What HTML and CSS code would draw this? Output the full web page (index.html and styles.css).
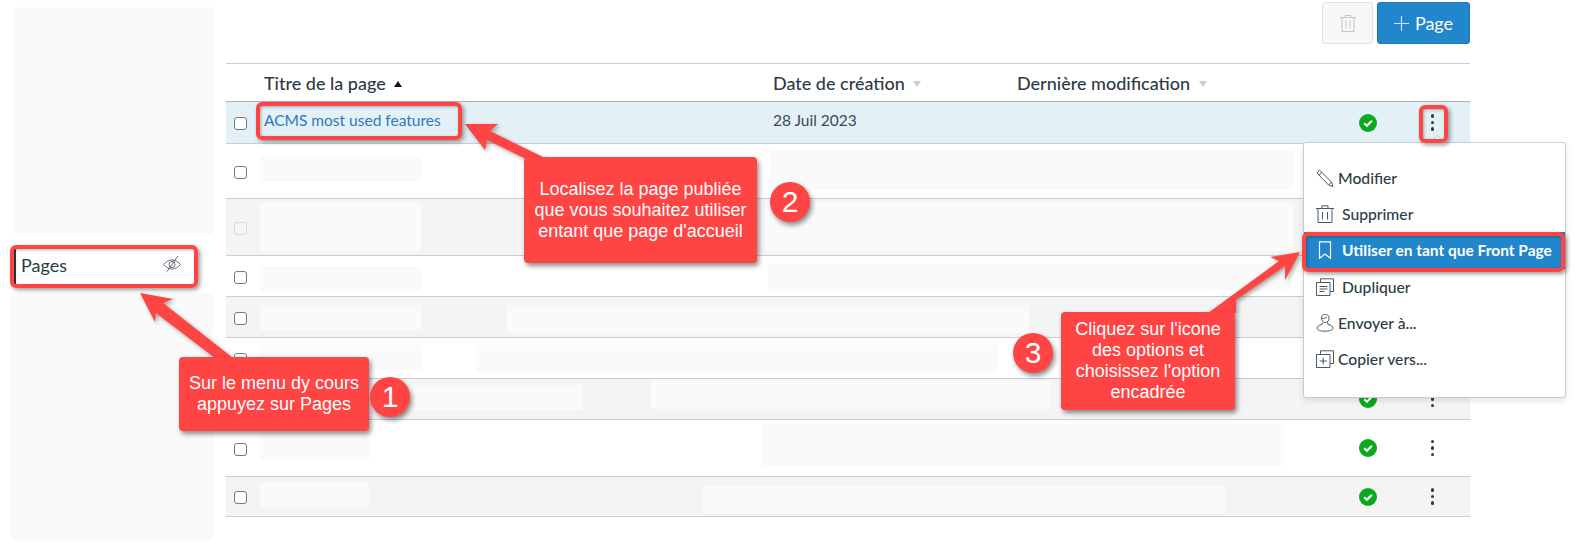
FILE: index.html
```html
<!doctype html>
<html lang="fr">
  <head>
    <meta charset="UTF-8" />
    <meta name="viewport" content="width=device-width, initial-scale=1.0" />
    <title>Pages</title>
    <link rel="stylesheet" href="styles.css">
  </head>
  <body>
    <div class="page">
      <aside class="sidebar">
        <div class="mask-side-top"></div>
        <a class="nav-link">
          <span>Pages</span>
          <svg class="nav-eye" viewBox="0 0 18 18" fill="none" stroke="#4f5b65" stroke-width="0.900">
            <path d="M.5 9.500C3 6.500 6 5 9 5s6 1.500 8.500 4.500C15 12.500 12 14 9 14s-6-1.500-8.500-4.500z" />
            <circle cx="9" cy="9.500" r="3" />
            <path d="M4 16.500 15 1" />
          </svg>
        </a>
        <div class="mask-side-bottom"></div>
      </aside>

      <main class="content">
        <div class="toolbar">
          <button class="btn-trash" disabled>
            <svg class="icon-18" viewBox="0 0 18 18" fill="none" stroke="#c2c6ca" stroke-width="1">
              <path d="M1 3.500h16M6 3.500V1.500h6v2M3 3.500v14h12v-14M7 6.500v8M11 6.500v8" />
            </svg>
          </button>
          <button class="btn-page">
            <svg class="btn-plus" viewBox="0 0 15 15" fill="none" stroke="#d5e6f3" stroke-width="1.200">
              <path d="M7.500 0v15M0 7.500h15" />
            </svg>
            Page
          </button>
        </div>

        <div class="table">
          <div class="row-head">
            <span></span>
            <span class="head-cell">Titre de la page <i class="caret caret-dark"></i></span>
            <span class="head-cell">Date de création <i class="caret"></i></span>
            <span class="head-cell">Dernière modification <i class="caret"></i></span>
          </div>

          <div class="row row-1 row-selected">
            <input class="check" type="checkbox" />
            <a class="title-link">ACMS most used features</a>
            <span class="date">28 Juil 2023</span>
            <span></span>
            <svg class="status" viewBox="0 0 18 18"><circle cx="9" cy="9" r="9" fill="#0aaa1e" /><path d="M5.200 9.300 7.900 11.800 12.900 6.800" fill="none" stroke="#fff" stroke-width="2.200" /></svg>
            <span class="kebab"><i></i><i></i><i></i></span>
          </div>

          <div class="row row-2">
            <input class="check" type="checkbox" />
            <span></span><span></span><span></span>
            <svg class="status" viewBox="0 0 18 18"><circle cx="9" cy="9" r="9" fill="#0aaa1e" /><path d="M5.200 9.300 7.900 11.800 12.900 6.800" fill="none" stroke="#fff" stroke-width="2.200" /></svg>
            <span class="kebab"><i></i><i></i><i></i></span>
            <div class="mask mask-a"></div>
            <div class="mask mask-b"></div>
          </div>

          <div class="row row-3 row-alt">
            <input class="check" type="checkbox" disabled />
            <span></span><span></span><span></span>
            <svg class="status" viewBox="0 0 18 18"><circle cx="9" cy="9" r="9" fill="#0aaa1e" /><path d="M5.200 9.300 7.900 11.800 12.900 6.800" fill="none" stroke="#fff" stroke-width="2.200" /></svg>
            <span class="kebab"><i></i><i></i><i></i></span>
            <div class="mask mask-a"></div>
            <div class="mask mask-b"></div>
          </div>

          <div class="row row-4">
            <input class="check" type="checkbox" />
            <span></span><span></span><span></span>
            <svg class="status" viewBox="0 0 18 18"><circle cx="9" cy="9" r="9" fill="#0aaa1e" /><path d="M5.200 9.300 7.900 11.800 12.900 6.800" fill="none" stroke="#fff" stroke-width="2.200" /></svg>
            <span class="kebab"><i></i><i></i><i></i></span>
            <div class="mask mask-a"></div>
            <div class="mask mask-b"></div>
          </div>

          <div class="row row-5 row-alt">
            <input class="check" type="checkbox" />
            <span></span><span></span><span></span>
            <svg class="status" viewBox="0 0 18 18"><circle cx="9" cy="9" r="9" fill="#0aaa1e" /><path d="M5.200 9.300 7.900 11.800 12.900 6.800" fill="none" stroke="#fff" stroke-width="2.200" /></svg>
            <span class="kebab"><i></i><i></i><i></i></span>
            <div class="mask mask-a"></div>
            <div class="mask mask-b"></div>
          </div>

          <div class="row row-6">
            <input class="check" type="checkbox" />
            <span></span><span></span><span></span>
            <svg class="status" viewBox="0 0 18 18"><circle cx="9" cy="9" r="9" fill="#0aaa1e" /><path d="M5.200 9.300 7.900 11.800 12.900 6.800" fill="none" stroke="#fff" stroke-width="2.200" /></svg>
            <span class="kebab"><i></i><i></i><i></i></span>
            <div class="mask mask-a"></div>
            <div class="mask mask-b"></div>
          </div>

          <div class="row row-7 row-alt">
            <input class="check" type="checkbox" />
            <span></span><span></span><span></span>
            <svg class="status" viewBox="0 0 18 18"><circle cx="9" cy="9" r="9" fill="#0aaa1e" /><path d="M5.200 9.300 7.900 11.800 12.900 6.800" fill="none" stroke="#fff" stroke-width="2.200" /></svg>
            <span class="kebab"><i></i><i></i><i></i></span>
            <div class="mask mask-a"></div>
            <div class="mask mask-b"></div>
          </div>

          <div class="row row-8">
            <input class="check" type="checkbox" />
            <span></span><span></span><span></span>
            <svg class="status" viewBox="0 0 18 18"><circle cx="9" cy="9" r="9" fill="#0aaa1e" /><path d="M5.200 9.300 7.900 11.800 12.900 6.800" fill="none" stroke="#fff" stroke-width="2.200" /></svg>
            <span class="kebab"><i></i><i></i><i></i></span>
            <div class="mask mask-a"></div>
            <div class="mask mask-b"></div>
          </div>

          <div class="row row-9 row-alt">
            <input class="check" type="checkbox" />
            <span></span><span></span><span></span>
            <svg class="status" viewBox="0 0 18 18"><circle cx="9" cy="9" r="9" fill="#0aaa1e" /><path d="M5.200 9.300 7.900 11.800 12.900 6.800" fill="none" stroke="#fff" stroke-width="2.200" /></svg>
            <span class="kebab"><i></i><i></i><i></i></span>
            <div class="mask mask-a"></div>
            <div class="mask mask-b"></div>
          </div>
        </div>
      </main>
    </div>

    <!-- dropdown opened from the first row -->
    <ul class="menu">
      <li class="menu-item">
        <svg class="icon-18" viewBox="0 0 18 18" fill="none" stroke="#4d5a64" stroke-width="1">
          <path d="M1 4 3.500 1.200 15.500 13 17 17.500 12.500 16zM3 6.200 5.700 3.300M12.500 16 15.500 13" />
        </svg>
        <span>Modifier</span>
      </li>
      <li class="menu-item wide">
        <svg class="icon-18" viewBox="0 0 18 18" fill="none" stroke="#4d5a64" stroke-width="1">
          <path d="M0 3.500h18M6 3.500V.8h6v2.700M2 3.500v14h14v-14M6.500 7v7.500M11.500 7v7.500" />
        </svg>
        <span>Supprimer</span>
      </li>
      <li class="menu-item wide active">
        <svg class="icon-18" viewBox="0 0 18 18" fill="none" stroke="#fff" stroke-width="1.200">
          <path d="M3.500 .8h11v16.500L9 13l-5.500 4.300z" />
        </svg>
        <span>Utiliser en tant que Front Page</span>
      </li>
      <li class="menu-item wide">
        <svg class="icon-18" viewBox="0 0 18 18" fill="none" stroke="#4d5a64" stroke-width="1">
          <path d="M.5 4.500h13.500v13H.5zM4.500 4.500V.8h13v12.700H14M3.500 8.500h8M3.500 11h8M3.500 13.500h5" />
        </svg>
        <span>Dupliquer</span>
      </li>
      <li class="menu-item">
        <svg class="icon-18" viewBox="0 0 18 18" fill="none" stroke="#4d5a64" stroke-width="1">
          <path d="M5.500 4.500a3.800 3.800 0 1 1 7.500 0c0 2-1.500 4-3.700 4s-3.800-2-3.800-4zM5.500 4.300c2.500 .5 4.500-.3 5.500-1.500M6.500 8.500 6 10.500c-3 .5-5 2-5 3.700 0 1.800 3.500 3 8 3s8-1.200 8-3c0-1.700-2-3.200-5-3.700l-.5-2" />
        </svg>
        <span>Envoyer à...</span>
      </li>
      <li class="menu-item">
        <svg class="icon-18" viewBox="0 0 18 18" fill="none" stroke="#4d5a64" stroke-width="1">
          <path d="M.5 4.500h13.500v13H.5zM4.500 4.500V.8h13v12.700H14M7.200 7.500v7M3.700 11h7" />
        </svg>
        <span>Copier vers...</span>
      </li>
    </ul>

    <!-- annotations drawn over the screenshot -->
    <svg class="arrows" viewBox="0 0 1581 551">
      <polygon points="140,293 173,299 163,303 233,358 215,358 156,313 155,322" />
      <polygon points="465,124 498,124 490,131 545,158 524,158 487,140 485,150" />
      <polygon points="1300,252 1270,257 1279,261 1208,313 1236,313 1236,300 1285,266 1285,280" />
    </svg>

    <div class="mark mark-nav"></div>
    <div class="mark mark-title"></div>
    <div class="mark mark-kebab"></div>
    <div class="mark mark-item"></div>

    <div class="callout callout-1">Sur le menu dy cours<br />appuyez sur Pages</div>
    <div class="callout callout-2">Localisez la page publiée<br />que vous souhaitez utiliser<br />entant que page d'accueil</div>
    <div class="callout callout-3">Cliquez sur l'icone<br />des options et<br />choisissez l'option<br />encadrée</div>

    <div class="step step-1">1</div>
    <div class="step step-2">2</div>
    <div class="step step-3">3</div>
  </body>
</html>
```

FILE: styles.css
```css
* {
  margin: 0;
  padding: 0;
  box-sizing: border-box;
}

html,
body {
  height: 551px;
  overflow: hidden;
}

body {
  position: relative;
  font-family: Lato, "Noto Sans", sans-serif;
  background: #fff;
  color: #2d3b45;
}

.page {
  display: flex;
}

.icon-18 {
  width: 18px;
  height: 18px;
  flex: none;
}

/* sidebar */
.sidebar {
  width: 226px;
  flex: none;
  padding-top: 7px;
}

.mask-side-top {
  width: 199px;
  height: 228px;
  margin-left: 14px;
  background: #fafafa;
}

.nav-link {
  display: flex;
  justify-content: space-between;
  width: 180px;
  height: 35px;
  margin: 14px 0 9px 14px;
  padding: 5px 13px 0 5px;
  border-left: 2px solid #2d3b45;
  font-size: 18px;
  line-height: 22px;
}

.nav-eye {
  width: 18px;
  height: 18px;
  margin-top: 1px;
}

.mask-side-bottom {
  width: 202px;
  height: 248px;
  margin-left: 11px;
  background: #fafafa;
}

/* toolbar */
.content {
  width: 1244px;
  flex: none;
}

.toolbar {
  display: flex;
  justify-content: flex-end;
  gap: 4px;
  height: 63px;
  padding-top: 2px;
}

.toolbar button {
  display: flex;
  align-items: center;
  justify-content: center;
  height: 42px;
  border-radius: 3px;
  font-family: inherit;
}

.btn-trash {
  width: 51px;
  background: #f7f7f7;
  border: 1px solid #e2e4e6;
}

.btn-page {
  width: 93px;
  gap: 6px;
  background: #2186cb;
  border: 1px solid #1d78b6;
  color: #fff;
  font-size: 18px;
}

.btn-plus {
  width: 15px;
  height: 15px;
}

/* table */
.table {
  border-top: 1px solid #c7cdd1;
}

.row-head,
.row {
  display: grid;
  grid-template-columns: 38px 509px 244px 323px 56px 74px;
  align-items: center;
}

.row-head {
  height: 38px;
  border-bottom: 1px solid #a9b2b8;
}

.head-cell {
  font-size: 18px;
  font-weight: 500;
  white-space: nowrap;
}

.caret {
  display: inline-block;
  margin-left: 4px;
  vertical-align: 3px;
  border-left: 4px solid transparent;
  border-right: 4px solid transparent;
  border-top: 6px solid #c7cdd1;
}

.caret-dark {
  border-top: 0;
  border-bottom: 6px solid #111;
}

.row {
  position: relative;
  border-bottom: 1px solid #c7cdd1;
}

.row-1 { height: 42px; }
.row-2 { height: 55px; }
.row-3 { height: 57px; }
.row-4 { height: 41px; }
.row-5 { height: 41px; }
.row-6 { height: 41px; }
.row-7 { height: 41px; }
.row-8 { height: 57px; }
.row-9 { height: 40px; }

.row-selected {
  background: #e3f0f6;
}

.row-alt {
  background: #f4f4f4;
}

.check {
  appearance: none;
  width: 13px;
  height: 13px;
  margin: 2px 0 0 8px;
  background: #fff;
  border: 1.300px solid #73797e;
  border-radius: 3px;
}

.check:disabled {
  background: transparent;
  border-color: #d8dadc;
}

.title-link {
  margin-top: -6px;
  font-size: 15.500px;
  color: #2b7abc;
}

.date {
  margin-top: -6px;
  font-size: 15.500px;
  color: #3b4a55;
}

.status {
  width: 18px;
  height: 18px;
  justify-self: center;
}

.kebab {
  display: flex;
  flex-direction: column;
  gap: 3px;
  justify-self: center;
  margin-left: -1px;
}

.kebab i {
  display: block;
  width: 3.500px;
  height: 3.500px;
  border-radius: 50%;
  background: #2d3b45;
}

/* blanked out page titles and dates */
.mask {
  position: absolute;
  left: 34px;
  width: 161px;
  height: 25px;
  background: #fafafa;
}

.mask-b {
  width: 522px;
  height: 28px;
}

.row-2 .mask-a { top: 13px; }
.row-2 .mask-b { top: 6px; left: 545px; height: 40px; }
.row-3 .mask-a { top: 3px; height: 49px; }
.row-3 .mask-b { top: 3px; left: 539px; width: 528px; height: 49px; }
.row-4 .mask-a { top: 10px; }
.row-4 .mask-b { top: 7px; left: 542px; }
.row-5 .mask-a { top: 8px; }
.row-5 .mask-b { top: 8px; left: 281px; }
.row-6 .mask-a { top: 7px; }
.row-6 .mask-b { top: 7px; left: 250px; }
.row-7 .mask-a { top: 6px; width: 322px; }
.row-7 .mask-b { top: 2px; left: 425px; width: 399px; }
.row-8 .mask-a { top: 12px; width: 109px; height: 28px; }
.row-8 .mask-b { top: 4px; left: 536px; height: 42px; }
.row-9 .mask-a { top: 5px; width: 109px; }
.row-9 .mask-b { top: 9px; left: 477px; }

/* dropdown */
.menu {
  position: absolute;
  left: 1303px;
  top: 142px;
  width: 263px;
  height: 256px;
  padding-top: 17px;
  list-style: none;
  background: #fff;
  border: 1px solid #c7cdd1;
  border-radius: 3px;
  box-shadow: 0 3px 6px rgba(0, 0, 0, 0.1);
}

.menu::before {
  content: "";
  position: absolute;
  top: -6px;
  left: 128px;
  width: 10px;
  height: 10px;
  background: #fff;
  border-top: 1px solid #c7cdd1;
  border-left: 1px solid #c7cdd1;
  transform: rotate(45deg);
}

.menu-item {
  display: flex;
  align-items: center;
  gap: 4px;
  height: 36.200px;
  padding-left: 12px;
  font-size: 15.700px;
  font-weight: 500;
  white-space: nowrap;
}

.menu-item.wide {
  gap: 8px;
}

.menu-item.active {
  background: #2186cb;
  color: #fff;
  font-size: 15.500px;
  font-weight: 700;
}

/* annotations */
.arrows {
  position: absolute;
  left: 0;
  top: 0;
  width: 1581px;
  height: 551px;
  fill: #ff4444;
  filter: drop-shadow(2px 2px 2px rgba(0, 0, 0, 0.35));
  pointer-events: none;
}

.mark {
  position: absolute;
  border: 4px solid #ff4444;
  border-radius: 6px;
  box-shadow: 2px 2px 4px rgba(0, 0, 0, 0.4), inset 1px 1px 3px rgba(0, 0, 0, 0.3);
}

.mark-nav { left: 10px; top: 245px; width: 188px; height: 43px; }
.mark-title { left: 256px; top: 102px; width: 206px; height: 38px; }
.mark-kebab { left: 1419px; top: 105px; width: 29px; height: 38px; }
.mark-item { left: 1302px; top: 232px; width: 263px; height: 40px; }

.callout {
  position: absolute;
  display: flex;
  align-items: center;
  justify-content: center;
  text-align: center;
  background: #ff4444;
  border-radius: 4px;
  box-shadow: 2px 3px 5px rgba(0, 0, 0, 0.45);
  color: #fff;
  font-family: "Liberation Sans", Arial, sans-serif;
  font-size: 18px;
  line-height: 21px;
}

.callout-1 { left: 179px; top: 357px; width: 190px; height: 74px; }
.callout-2 { left: 524px; top: 157px; width: 233px; height: 106px; }
.callout-3 { left: 1061px; top: 312px; width: 174px; height: 98px; }

.step {
  position: absolute;
  width: 40px;
  height: 40px;
  line-height: 40px;
  text-align: center;
  background: #ff4444;
  border-radius: 50%;
  box-shadow: 2px 3px 5px rgba(0, 0, 0, 0.45);
  color: #fff;
  font-family: "Liberation Sans", Arial, sans-serif;
  font-size: 30px;
}

.step-1 { left: 370px; top: 377px; }
.step-2 { left: 770px; top: 182px; }
.step-3 { left: 1013px; top: 333px; }
```
